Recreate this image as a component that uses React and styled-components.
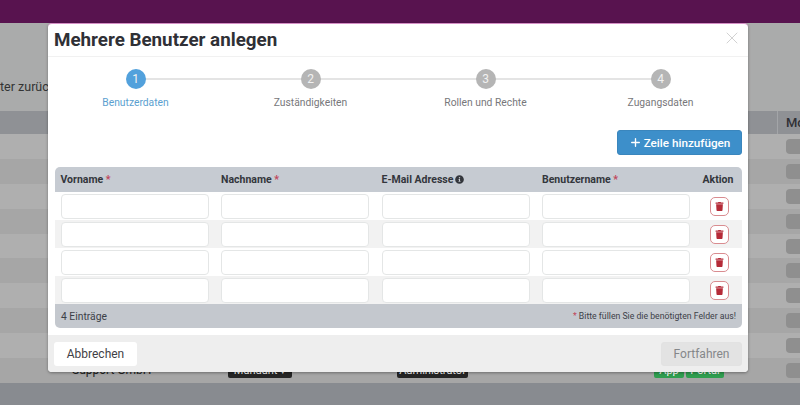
import styled, { createGlobalStyle } from "styled-components";
import { FaInfoCircle, FaTrash } from "react-icons/fa";
import { Plus, X } from "lucide-react";

const GlobalStyle = createGlobalStyle`
  html, body {
    margin: 0;
    padding: 0;
    background: #a9a9a9;
  }

  * {
    box-sizing: border-box;
  }
`;

const Page = styled.div`
  /* Layout */
  position: relative;
  display: flex;
  flex-direction: column;
  width: 800px;
  height: 405px;
  overflow: hidden;

  /* Font */
  font-family: Roboto, "Liberation Sans", sans-serif;
  color: #2f3036;

  /* Style */
  background-color: #aaabab;
`;

const TopBar = styled.div`
  flex: 0 0 23px;
  background-color: #58134f;
`;

const BackToolbar = styled.div`
  /* Layout */
  flex: 0 0 88px;
  display: flex;
  align-items: center;
  padding-top: 38px;

  /* Font */
  font-size: 12.5px;
  color: #333;
  white-space: nowrap;

  span {
    margin-left: -13px;
  }
`;

const BackHeader = styled.div`
  /* Layout */
  flex: 0 0 23px;
  display: grid;
  grid-template-columns: 777px 1fr;
  align-items: center;

  /* Font */
  font-size: 13px;
  font-weight: 500;

  /* Style */
  background-color: #8f9195;

  span {
    padding-left: 8px;
    height: 100%;
    line-height: 23px;
    border-left: 1px solid #a3a5a8;
  }
`;

const BackRow = styled.div`
  /* Layout */
  flex: 0 0 24.9px;
  display: grid;
  grid-template-columns: 72px 156px 169px 257px 32px 40px 1fr;
  align-items: center;

  /* Style */
  background-color: ${(props) => (props.$odd ? "#a6a6a6" : "#afafaf")};
`;

const BackPill = styled.div`
  grid-column: 7;
  width: 30px;
  height: 15px;
  margin-left: 60px;
  border-radius: 4px;
  background-color: #8f8f8f;
`;

const BackName = styled.div`
  grid-column: 2;
  font-size: 12px;
  color: #222;
  white-space: nowrap;
`;

const BackBadge = styled.div`
  height: 15px;
  width: ${(props) => props.$width}px;
  border-radius: 2px;
  font-size: 11px;
  line-height: 15px;
  text-align: center;
  white-space: nowrap;
  color: #fff;
  background-color: ${(props) => props.$color};
`;

const BackFooter = styled.div`
  flex: 1;
  background-color: #888b90;
`;

const Modal = styled.div`
  /* Layout */
  position: absolute;
  top: 23px;
  left: 48px;
  display: flex;
  flex-direction: column;
  width: 700px;
  height: 349px;

  /* Box */
  border-top: 1px solid #d58ec6;
  border-radius: 4px;

  /* Style */
  background-color: #fff;
  box-shadow: 0 1px 3px rgba(0, 0, 0, 0.35);
  overflow: hidden;
`;

const ModalHeader = styled.header`
  /* Layout */
  flex: 0 0 33px;
  display: flex;
  align-items: center;
  justify-content: space-between;
  padding: 0 6px 0 6px;

  /* Box */
  border-bottom: 1px solid #f1f1f1;
`;

const Title = styled.h2`
  margin: 0;
  font-size: 18.8px;
  font-weight: 700;
  line-height: 30px;
  color: #2f3036;
`;

const CloseIcon = styled(X)`
  color: #c9c9c9;
  margin-top: -4px;
`;

const Steps = styled.div`
  display: grid;
  grid-template-columns: repeat(4, 175px);
  padding-top: 12px;
`;

const Step = styled.div`
  position: relative;
  display: flex;
  flex-direction: column;
  align-items: center;
  gap: 6px;

  &:not(:last-child)::after {
    content: "";
    position: absolute;
    top: 9px;
    left: 50%;
    width: 100%;
    height: 2px;
    background-color: #e4e4e4;
  }
`;

const StepDot = styled.div`
  /* Layout */
  position: relative;
  z-index: 1;
  display: flex;
  align-items: center;
  justify-content: center;
  width: 20px;
  height: 20px;

  /* Font */
  font-size: 12px;
  color: #f1f1f1;

  /* Box */
  border-radius: 50%;

  /* Style */
  background-color: ${(props) => (props.$active ? "#52a1dc" : "#b5b5b5")};
`;

const StepLabel = styled.div`
  font-size: 10.3px;
  line-height: 16px;
  color: ${(props) => (props.$active ? "#5b9fd0" : "#77777a")};
`;

const Body = styled.div`
  flex: 1;
  display: flex;
  flex-direction: column;
  padding: 0 6px 0 7px;
`;

const Actions = styled.div`
  display: flex;
  justify-content: flex-end;
  padding-top: 19px;
  margin-bottom: 12px;
`;

const AddButton = styled.button`
  /* Layout */
  display: flex;
  align-items: center;
  justify-content: center;
  gap: 2px;
  width: 125px;
  height: 25px;
  padding: 0;

  /* Font */
  font-family: inherit;
  font-size: 11.7px;
  font-weight: 500;
  color: #fff;

  /* Box */
  border: 1px solid #3a86bd;
  border-radius: 3px;

  /* Style */
  background-color: #3d8fca;
`;

const Table = styled.div`
  display: flex;
  flex-direction: column;
  border-radius: 5px;
  overflow: hidden;
`;

const CommonRow = styled.div`
  display: grid;
  grid-template-columns: repeat(4, 148px) 1fr;
  column-gap: 12.5px;
  align-items: center;
  padding: 0 5px 0 5.5px;
`;

const HeaderRow = styled(CommonRow)`
  /* Box */
  height: 25px;

  /* Font */
  font-size: 10.5px;
  font-weight: 700;
  color: #33363c;

  /* Style */
  background-color: #c6cbd2;
`;

const Required = styled.span`
  color: #c0455a;
`;

const HeaderInfo = styled.span`
  display: inline-flex;
  align-items: center;
  gap: 2px;

  svg {
    color: #33363c;
  }
`;

const ActionHead = styled.div`
  text-align: right;
  padding-right: 5px;
`;

const Row = styled(CommonRow)`
  height: 28px;
  background-color: ${(props) => (props.$alt ? "#f2f2f2" : "#fff")};
`;

const TextInput = styled.input`
  width: 100%;
  height: 25px;
  border: 1px solid #e4e6e6;
  border-radius: 4px;
  background-color: #fff;
`;

const TrashButton = styled.button`
  /* Layout */
  display: flex;
  align-items: center;
  justify-content: center;
  width: 19px;
  height: 19px;
  padding: 0;
  margin-left: 7px;

  /* Box */
  border: 1px solid #d98c90;
  border-radius: 5px;

  /* Style */
  color: #b52b38;
  background-color: #fff;
`;

const TableFooter = styled.div`
  /* Layout */
  display: flex;
  align-items: center;
  justify-content: space-between;
  height: 24px;
  padding: 0 6px;

  /* Font */
  font-size: 10.3px;
  color: #3c4048;

  /* Style */
  background-color: #c4c8ce;
`;

const Hint = styled.div`
  font-size: 8.7px;
`;

const ModalFooter = styled.footer`
  /* Layout */
  flex: 0 0 37px;
  display: flex;
  align-items: center;
  justify-content: space-between;
  padding: 0 6px;

  /* Style */
  background-color: #eeeeee;
`;

const CancelButton = styled.button`
  width: 83px;
  height: 24px;
  padding: 0;
  font-family: inherit;
  font-size: 12px;
  color: #3f4045;
  border: 0;
  border-radius: 3px;
  background-color: #fff;
`;

const NextButton = styled.button`
  width: 81px;
  height: 24px;
  padding: 0;
  font-family: inherit;
  font-size: 12px;
  color: #85878a;
  border: 1px solid #e2e2e2;
  border-radius: 3px;
  background-color: #e3e3e3;
`;

const steps = ["Benutzerdaten", "Zuständigkeiten", "Rollen und Rechte", "Zugangsdaten"];
const backRows = [0, 1, 2, 3, 4, 5, 6, 7, 8];

export default function App() {
  return (
    <Page>
      <GlobalStyle />
      <TopBar />
      <BackToolbar>
        <span>Filter zurücksetzen</span>
      </BackToolbar>
      <BackHeader>
        <div />
        <span>Module</span>
      </BackHeader>
      {backRows.map((row) => (
        <BackRow key={row} $odd={row % 2 === 1}>
          <BackPill />
        </BackRow>
      ))}
      <BackRow $odd>
        <BackName>Support GmbH</BackName>
        <BackBadge $width={64} $color="#252525">
          Mandant ▾
        </BackBadge>
        <BackBadge $width={71} $color="#252525">
          Administrator
        </BackBadge>
        <BackBadge $width={30} $color="#2f9e4f">
          App
        </BackBadge>
        <BackBadge $width={38} $color="#2f9e4f">
          Portal
        </BackBadge>
        <BackPill />
      </BackRow>
      <BackFooter />

      <Modal>
        <ModalHeader>
          <Title>Mehrere Benutzer anlegen</Title>
          <CloseIcon size={20} strokeWidth={1} />
        </ModalHeader>
        <Steps>
          {steps.map((label, index) => (
            <Step key={label}>
              <StepDot $active={index === 0}>{index + 1}</StepDot>
              <StepLabel $active={index === 0}>{label}</StepLabel>
            </Step>
          ))}
        </Steps>
        <Body>
          <Actions>
            <AddButton>
              <Plus size={13} strokeWidth={2.5} />
              Zeile hinzufügen
            </AddButton>
          </Actions>
          <Table>
            <HeaderRow>
              <div>
                Vorname <Required>*</Required>
              </div>
              <div>
                Nachname <Required>*</Required>
              </div>
              <HeaderInfo>
                E-Mail Adresse <FaInfoCircle size={9} />
              </HeaderInfo>
              <div>
                Benutzername <Required>*</Required>
              </div>
              <ActionHead>Aktion</ActionHead>
            </HeaderRow>
            {[0, 1, 2, 3].map((row) => (
              <Row key={row} $alt={row % 2 === 1}>
                <TextInput />
                <TextInput />
                <TextInput />
                <TextInput />
                <TrashButton>
                  <FaTrash size={9} />
                </TrashButton>
              </Row>
            ))}
            <TableFooter>
              <div>4 Einträge</div>
              <Hint>
                <Required>*</Required> Bitte füllen Sie die benötigten Felder aus!
              </Hint>
            </TableFooter>
          </Table>
        </Body>
        <ModalFooter>
          <CancelButton>Abbrechen</CancelButton>
          <NextButton>Fortfahren</NextButton>
        </ModalFooter>
      </Modal>
    </Page>
  );
}
